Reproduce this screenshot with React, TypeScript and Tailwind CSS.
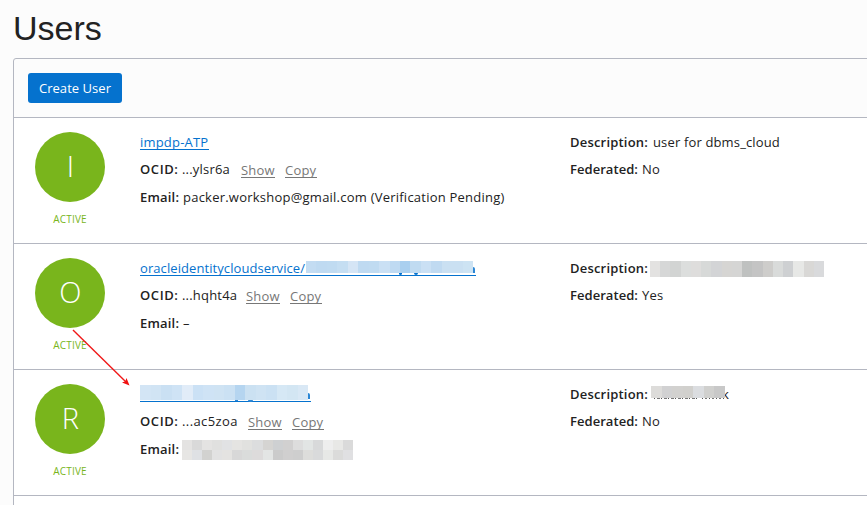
import type { ReactNode } from "react";

function Mosaic({ rows }: { rows: string[][] }) {
  return (
    <span className="flex h-full w-full flex-col">
      {rows.map((row, r) => (
        <span key={r} className="flex flex-1">
          {row.map((color, i) => (
            <span key={i} className="h-full flex-1" style={{ backgroundColor: color }} />
          ))}
        </span>
      ))}
    </span>
  );
}

function Label({ className, children }: { className: string; children: ReactNode }) {
  return <b className={`shrink-0 font-semibold ${className}`}>{children}</b>;
}

function Action({ className, children }: { className: string; children: ReactNode }) {
  return <a className={`mr-[10px] h-[17px] border-b border-[#777] leading-[18px] text-[#777] ${className}`}>{children}</a>;
}

function Row({ letter, name, ocid, ocidWidth, email, description, federated }: {
  letter: string;
  name: ReactNode;
  ocid: string;
  ocidWidth: string;
  email: ReactNode;
  description: ReactNode;
  federated: string;
}) {
  return (
    <section className="flex h-[126px] border-b border-[#b4b7c1] bg-white">
      <div className="ml-[21px] mt-[14px] flex w-[70px] flex-col items-center">
        <div className="flex h-[70px] w-[70px] items-center justify-center rounded-full bg-[#79b51c] pb-[3px] pl-[1px] text-[29px] font-light text-white">
          {letter}
        </div>
        <span className="mt-[10px] text-[10px] leading-[15px] text-[#79b51c]">ACTIVE</span>
      </div>
      <div className="ml-[35px] mt-[10px] w-[430px]">
        <div className="flex h-[28px] items-center">{name}</div>
        <div className="flex h-[27px] items-center">
          <Label className="w-[42px] tracking-[0.6px]">OCID:</Label>
          <span className={`mr-[10px] ${ocidWidth}`}>...{ocid}</span>
          <Action className="w-[34px]">Show</Action>
          <Action className="w-[32px]">Copy</Action>
        </div>
        <div className="flex h-[28px] items-center pt-[2px]">
          <Label className="w-[43px]">Email:</Label>
          {email}
        </div>
      </div>
      <div className="mt-[10px]">
        <div className="flex h-[28px] items-center pt-[2px]">
          <Label className="w-[83px]">Description:</Label>
          {description}
        </div>
        <div className="flex h-[27px] items-center">
          <Label className="w-[72px] tracking-[0.05px]">Federated:</Label>
          <span>{federated}</span>
        </div>
      </div>
    </section>
  );
}

const link = "h-[16px] border-b border-[#0572ce] leading-[17px] text-[#0572ce]";

export default function App() {
  return (
    <main className="relative h-[505px] w-[867px] overflow-hidden bg-[#fcfcfc] font-['Open_Sans',sans-serif] text-[13px] tracking-[0.2px] whitespace-nowrap text-[#222]">
      <h1 className="h-[58px] pl-[13px] pt-[8px] font-['Liberation_Sans',Arial,sans-serif] text-[34px] leading-[40px] tracking-normal">Users</h1>
      <div className="ml-[13px] h-[460px] w-[870px] rounded-tl-[3px] border border-[#b4b7c1]">
        <header className="flex h-[59px] items-center border-b border-[#b4b7c1] pl-[14px]">
          <button className="flex h-[30px] w-[94px] items-center justify-center rounded-[3px] bg-[#0572ce] pt-px tracking-[0.05px] text-white">Create User</button>
        </header>
        <Row
          letter="I"
          name={<a className={`w-[69px] ${link}`}>impdp-ATP</a>}
          ocid="ylsr6a"
          ocidWidth="w-[49px]"
          email={<span className="tracking-[0.23px]">packer.workshop@gmail.com (Verification Pending)</span>}
          description={<span className="tracking-[0.15px]">user for dbms_cloud</span>}
          federated="No"
        />
        <Row
          letter="O"
          name={
            <a className={`relative w-[336px] tracking-[0.08px] ${link}`}>
              oracleidentitycloudservice/
              <span className="absolute left-[259px] top-[12px] h-[3px] w-[3px] rounded-b bg-[#0572ce]" />
              <span className="absolute left-[274px] top-[12px] h-[3px] w-[4px] rounded-b bg-[#0572ce]" />
              <span className="absolute left-[333px] top-[7px] h-[6px] w-[2px] rounded-tr bg-[#2c87d5]" />
              <span className="absolute left-[166px] top-[1px] h-[12px] w-[167px]">
                <Mosaic rows={[["#c3dcf2", "#bfdaf1", "#c0dbf1", "#c5def2", "#d5e5f5", "#bfdaf1", "#c0dbf1", "#cae0f4", "#bfdaf2", "#a9cfef", "#c0dbf1", "#cae0f4", "#c0daf1", "#cae0f2", "#cae0f2", "#cde3f3"]]} />
              </span>
            </a>
          }
          ocid="hqht4a"
          ocidWidth="w-[54px]"
          email={<span>–</span>}
          description={
            <span className="ml-[-3px] h-[16px] w-[174px]">
              <Mosaic rows={[["#e3e2e1", "#d6d7d7", "#d2d4d3", "#dcdedd", "#dedddc", "#d7d9d8", "#d3d4d6", "#d6d5d3", "#d5d5d4", "#bfc1c0", "#c4c4c4", "#cecdcb", "#d9dbda", "#ced0d2", "#e7e8e6", "#d9d8d6", "#d9dadc"]]} />
            </span>
          }
          federated="Yes"
        />
        <Row
          letter="R"
          name={
            <a className={`relative w-[171px] ${link}`}>
              <span className="absolute left-[95px] top-[14px] h-px w-[3px] bg-[#2c87d5]" />
              <span className="absolute left-[108px] top-[14px] h-[2px] w-[5px] rounded-b bg-[#2c87d5]" />
              <span className="absolute left-[168px] top-[7px] h-[6px] w-[2px] rounded-tr bg-[#2c87d5]" />
              <span className="absolute left-0 top-[-1px] h-[15px] w-[168px]">
                <Mosaic rows={[["#d3e5f5", "#d1e4f4", "#cae0f3", "#cfe3f5", "#e1ecf8", "#cbe1f5", "#cfe3f5", "#cfe3f3", "#cbe1f3", "#b5d5f0", "#cbe1f2", "#cfe3f3", "#cbe1f3", "#d6e8f5", "#d3e6f3", "#d9e8f5"]]} />
              </span>
            </a>
          }
          ocid="ac5zoa"
          ocidWidth="w-[56px] tracking-[0.4px]"
          email={
            <span className="ml-[-1px] h-[20px] w-[171px]">
              <Mosaic
                rows={[
                  ["#e4e3e2", "#d9d9d9", "#e4e3e2", "#e0e0df", "#e1e2e4", "#e5e4e2", "#e1e1df", "#dcddde", "#d5d4d2", "#ced0d2", "#d1d0d0", "#dddddd", "#e2e5e4", "#d8d9da", "#eeeeee", "#e8e8e6", "#dadada"],
                  ["#e7e6e4", "#dfe1e4", "#d2d2d0", "#e2e2e2", "#e4e3e1", "#d8d8d8", "#dadcdb", "#dddbdb", "#e3e5e4", "#cbcbcb", "#d0cfcf", "#cecece", "#dddddb", "#d9dadb", "#e7e8e6", "#dbdbda", "#e0e0e2"],
                ]}
              />
            </span>
          }
          description={
            <span className="relative ml-[-2px] h-[20px] w-[78px]">
              <span className="absolute right-0 top-[-1px] leading-[20px]">k</span>
              <span className="absolute bottom-[6px] left-[3px] h-px w-[44px] bg-[repeating-linear-gradient(90deg,#555_0_1px,#fff_1px_3px,#777_3px_6px,#fff_6px_7px)]" />
              <span className="absolute bottom-[6px] left-[51px] h-px w-[23px] bg-[repeating-linear-gradient(90deg,#555_0_1px,#fff_1px_3px,#777_3px_5px,#fff_5px_7px)]" />
              <span className="absolute left-0 top-[1px] h-[12px] w-[74px]">
                <Mosaic rows={[["#dddcda", "#d1d1d2", "#d2d1cf", "#d1d0cd", "#dbdde0", "#d0d0ce", "#c8c8c8"]]} />
              </span>
            </span>
          }
          federated="No"
        />
        <div className="h-[126px] bg-white" />
      </div>
      <svg className="absolute left-0 top-0 h-[505px] w-[200px]" viewBox="0 0 200 505">
        <path d="M73 330 126 382" stroke="#f01818" strokeWidth="1.4" />
        <path d="M129.500 385.500 122 382.500 125.300 381.300 126.500 378Z" fill="#f01010" />
      </svg>
    </main>
  );
}
